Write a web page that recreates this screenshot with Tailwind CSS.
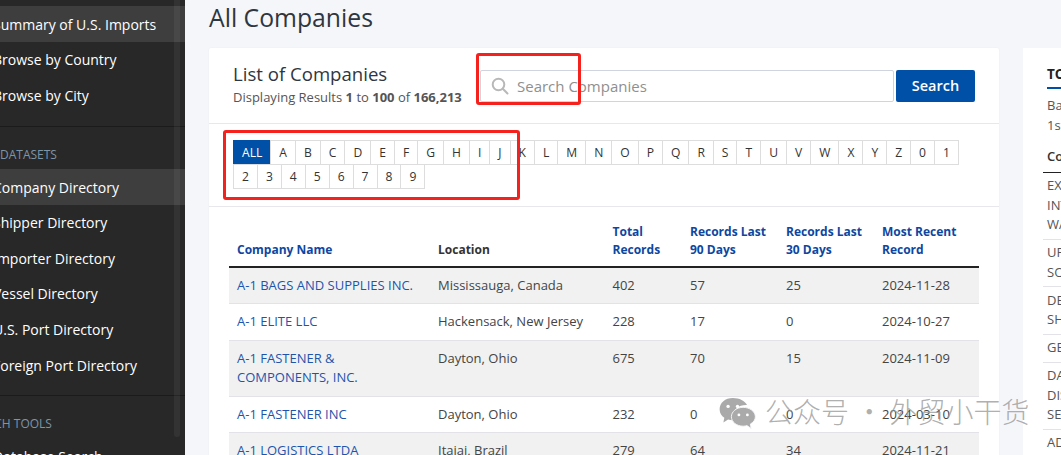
<!DOCTYPE html>
<html lang="en">
<head>
<meta charset="utf-8">
<script src="https://cdn.jsdelivr.net/npm/@tailwindcss/browser@4"></script>
</head>
<body class="relative w-[1061px] h-[455px] overflow-hidden bg-[#f5f6fa] font-['Open_Sans',sans-serif] flex">
<aside class="relative w-[185px] h-[455px] shrink-0 overflow-hidden bg-[#282828] text-white text-[14px]">
  <div class="absolute right-[5px] top-0 w-[6px] h-[437px] rounded-b bg-white/5"></div>
  <nav class="pt-[6px] w-[185px]">
    <a class="flex items-center h-[36px] -indent-[7px] bg-white/10">Summary of U.S. Imports</a>
    <a class="flex items-center h-[36px] pb-[2px] -indent-[7px]">Browse by Country</a>
    <a class="flex items-center h-[36px] pb-[2px] -indent-[7px]">Browse by City</a>
    <div class="mt-[12px] border-t border-black/30"></div>
    <p class="pt-[20px] pb-[6px] text-[12px] leading-[16px] text-[#7d95a8]">DATASETS</p>
    <a class="flex items-center h-[35.6px] pt-[1.4px] -indent-[7px] bg-white/10">Company Directory</a>
    <a class="flex items-center h-[35.6px] pt-[1px] -indent-[7px]">Shipper Directory</a>
    <a class="flex items-center h-[35.6px] pt-[1.4px] -indent-[7px]">Importer Directory</a>
    <a class="flex items-center h-[35.6px] -indent-[7px]">Vessel Directory</a>
    <a class="flex items-center h-[35.6px] pt-[1px] -indent-[7px]">U.S. Port Directory</a>
    <a class="flex items-center h-[35.6px] pt-[1.4px] -indent-[7px]">Foreign Port Directory</a>
    <div class="mt-[12px] border-t border-black/30"></div>
    <p class="pt-[20px] pb-[6px] text-[12px] leading-[16px] text-[#7d95a8] -indent-[34px] whitespace-nowrap">SEARCH TOOLS</p>
    <a class="flex items-center h-[35.6px] pt-[2px] -indent-[7px]">Database Search</a>
  </nav>
</aside>
<main class="pl-[24px] flex-1 min-w-0">
  <h1 class="text-[24.75px] leading-[36px] text-[#2f3640] font-normal h-[48px]">All Companies</h1>
  <div class="flex gap-[24px] items-start">
    <section class="w-[790px] shrink-0 bg-white rounded-t-[2px] shadow-[0_0_2px_rgba(0,0,0,0.05)]">
      <div class="flex items-start h-[76px] border-b border-[#e8e8ec] px-[24px]">
        <div class="w-[247px] shrink-0 pt-[13px]">
          <h2 class="text-[18.6px] leading-[25px] text-[#2f3640]">List of Companies</h2>
          <p class="text-[13px] leading-[20px] pt-[1px] text-[#555] whitespace-nowrap">Displaying Results <b>1</b> to <b>100</b> of <b>166,213</b></p>
        </div>
        <div class="flex items-center gap-[2px] mt-[22px] flex-1">
          <div class="flex items-center flex-1 h-[32px] border border-[#cfd4de] rounded-[2px] pl-[10px]">
            <svg class="w-[18px] h-[18px] text-[#b8b8b8]" viewBox="0 0 18 18" fill="none" stroke="currentColor" stroke-width="2"><circle cx="7.500" cy="7.500" r="5.800"/><path d="M11.800 11.800 16.500 16.500" stroke-linecap="round"/></svg>
            <span class="ml-[8px] text-[15px] text-[#8f8f8f]">Search Companies</span>
          </div>
          <button class="w-[79px] h-[32px] rounded-[2px] bg-[#0050a8] text-white text-[14.5px] font-semibold">Search</button>
        </div>
      </div>
      <div class="h-[83px] border-b border-[#e8e8ec] px-[24px] pt-[16px]">
        <div class="flex flex-wrap text-[12.1px] text-[#333]">
          <a class="h-[25px] leading-[23px] px-[8px] border border-[#0050a8] bg-[#0050a8] text-white font-medium mr-[-1px] mb-[-1px]">ALL</a>
          <a class="h-[25px] leading-[23px] px-[8px] border border-[#ddd] mr-[-1px] mb-[-1px]">A</a>
          <a class="h-[25px] leading-[23px] px-[8px] border border-[#ddd] mr-[-1px] mb-[-1px]">B</a>
          <a class="h-[25px] leading-[23px] px-[8px] border border-[#ddd] mr-[-1px] mb-[-1px]">C</a>
          <a class="h-[25px] leading-[23px] px-[8px] border border-[#ddd] mr-[-1px] mb-[-1px]">D</a>
          <a class="h-[25px] leading-[23px] px-[8px] border border-[#ddd] mr-[-1px] mb-[-1px]">E</a>
          <a class="h-[25px] leading-[23px] px-[8px] border border-[#ddd] mr-[-1px] mb-[-1px]">F</a>
          <a class="h-[25px] leading-[23px] px-[8px] border border-[#ddd] mr-[-1px] mb-[-1px]">G</a>
          <a class="h-[25px] leading-[23px] px-[8px] border border-[#ddd] mr-[-1px] mb-[-1px]">H</a>
          <a class="h-[25px] leading-[23px] px-[8px] border border-[#ddd] mr-[-1px] mb-[-1px]">I</a>
          <a class="h-[25px] leading-[23px] px-[8px] border border-[#ddd] mr-[-1px] mb-[-1px]">J</a>
          <a class="h-[25px] leading-[23px] px-[8px] border border-[#ddd] mr-[-1px] mb-[-1px]">K</a>
          <a class="h-[25px] leading-[23px] px-[8px] border border-[#ddd] mr-[-1px] mb-[-1px]">L</a>
          <a class="h-[25px] leading-[23px] px-[8px] border border-[#ddd] mr-[-1px] mb-[-1px]">M</a>
          <a class="h-[25px] leading-[23px] px-[8px] border border-[#ddd] mr-[-1px] mb-[-1px]">N</a>
          <a class="h-[25px] leading-[23px] px-[8px] border border-[#ddd] mr-[-1px] mb-[-1px]">O</a>
          <a class="h-[25px] leading-[23px] px-[8px] border border-[#ddd] mr-[-1px] mb-[-1px]">P</a>
          <a class="h-[25px] leading-[23px] px-[8px] border border-[#ddd] mr-[-1px] mb-[-1px]">Q</a>
          <a class="h-[25px] leading-[23px] px-[8px] border border-[#ddd] mr-[-1px] mb-[-1px]">R</a>
          <a class="h-[25px] leading-[23px] px-[8px] border border-[#ddd] mr-[-1px] mb-[-1px]">S</a>
          <a class="h-[25px] leading-[23px] px-[8px] border border-[#ddd] mr-[-1px] mb-[-1px]">T</a>
          <a class="h-[25px] leading-[23px] px-[8px] border border-[#ddd] mr-[-1px] mb-[-1px]">U</a>
          <a class="h-[25px] leading-[23px] px-[8px] border border-[#ddd] mr-[-1px] mb-[-1px]">V</a>
          <a class="h-[25px] leading-[23px] px-[8px] border border-[#ddd] mr-[-1px] mb-[-1px]">W</a>
          <a class="h-[25px] leading-[23px] px-[8px] border border-[#ddd] mr-[-1px] mb-[-1px]">X</a>
          <a class="h-[25px] leading-[23px] px-[8px] border border-[#ddd] mr-[-1px] mb-[-1px]">Y</a>
          <a class="h-[25px] leading-[23px] px-[8px] border border-[#ddd] mr-[-1px] mb-[-1px]">Z</a>
          <a class="h-[25px] leading-[23px] px-[8px] border border-[#ddd] mr-[-1px] mb-[-1px]">0</a>
          <a class="h-[25px] leading-[23px] px-[8px] border border-[#ddd] mr-[-1px] mb-[-1px]">1</a>
          <a class="h-[25px] leading-[23px] px-[8px] border border-[#ddd] mr-[-1px] mb-[-1px]">2</a>
          <a class="h-[25px] leading-[23px] px-[8px] border border-[#ddd] mr-[-1px] mb-[-1px]">3</a>
          <a class="h-[25px] leading-[23px] px-[8px] border border-[#ddd] mr-[-1px] mb-[-1px]">4</a>
          <a class="h-[25px] leading-[23px] px-[8px] border border-[#ddd] mr-[-1px] mb-[-1px]">5</a>
          <a class="h-[25px] leading-[23px] px-[8px] border border-[#ddd] mr-[-1px] mb-[-1px]">6</a>
          <a class="h-[25px] leading-[23px] px-[8px] border border-[#ddd] mr-[-1px] mb-[-1px]">7</a>
          <a class="h-[25px] leading-[23px] px-[8px] border border-[#ddd] mr-[-1px] mb-[-1px]">8</a>
          <a class="h-[25px] leading-[23px] px-[8px] border border-[#ddd] mr-[-1px] mb-[-1px]">9</a>
        </div>
      </div>
      <div class="px-[20px] pt-[8px]">
        <table class="w-[750px] table-fixed border-collapse text-[13px] leading-[19px] text-[#444]">
          <colgroup><col class="w-[201px]"><col class="w-[174.5px]"><col class="w-[77.5px]"><col class="w-[96px]"><col class="w-[96px]"><col class="w-[105px]"></colgroup>
          <thead class="text-[12px] leading-[18px] font-bold text-[#0d47a1] text-left">
            <tr class="border-b-2 border-[#222]">
              <th class="align-bottom pt-[8px] px-[8px] pb-[7px] font-bold">Company Name</th>
              <th class="align-bottom pt-[8px] px-[8px] pb-[7px] font-bold text-[#333]">Location</th>
              <th class="align-bottom pt-[8px] px-[8px] pb-[7px] font-bold">Total Records</th>
              <th class="align-bottom pt-[8px] px-[8px] pb-[7px] font-bold">Records Last 90 Days</th>
              <th class="align-bottom pt-[8px] px-[8px] pb-[7px] font-bold">Records Last 30 Days</th>
              <th class="align-bottom pt-[8px] px-[8px] pb-[7px] font-bold">Most Recent Record</th>
            </tr>
          </thead>
          <tbody>
            <tr class="bg-[#f1f1f1] border-b border-[#e2e2e8]"><td class="align-top py-[8px] px-[8px] text-[#1d55ad]">A-1 BAGS AND SUPPLIES INC.</td><td class="align-top py-[8px] px-[8px]">Mississauga, Canada</td><td class="align-top py-[8px] px-[8px]">402</td><td class="align-top py-[8px] px-[8px]">57</td><td class="align-top py-[8px] px-[8px]">25</td><td class="align-top py-[8px] px-[8px]">2024-11-28</td></tr>
            <tr class="border-b border-[#e2e2e8]"><td class="align-top pt-[8px] pb-[9px] px-[8px] text-[#1d55ad]">A-1 ELITE LLC</td><td class="align-top pt-[8px] pb-[9px] px-[8px]">Hackensack, New Jersey</td><td class="align-top pt-[8px] pb-[9px] px-[8px]">228</td><td class="align-top pt-[8px] pb-[9px] px-[8px]">17</td><td class="align-top pt-[8px] pb-[9px] px-[8px]">0</td><td class="align-top pt-[8px] pb-[9px] px-[8px]">2024-10-27</td></tr>
            <tr class="bg-[#f1f1f1] border-b border-[#e2e2e8]"><td class="align-top pt-[8px] pb-[9px] px-[8px] text-[#1d55ad]">A-1 FASTENER &amp; COMPONENTS, INC.</td><td class="align-top pt-[8px] pb-[9px] px-[8px]">Dayton, Ohio</td><td class="align-top pt-[8px] pb-[9px] px-[8px]">675</td><td class="align-top pt-[8px] pb-[9px] px-[8px]">70</td><td class="align-top pt-[8px] pb-[9px] px-[8px]">15</td><td class="align-top pt-[8px] pb-[9px] px-[8px]">2024-11-09</td></tr>
            <tr class="border-b border-[#e2e2e8]"><td class="align-top py-[8px] px-[8px] text-[#1d55ad]">A-1 FASTENER INC</td><td class="align-top py-[8px] px-[8px]">Dayton, Ohio</td><td class="align-top py-[8px] px-[8px]">232</td><td class="align-top py-[8px] px-[8px]">0</td><td class="align-top py-[8px] px-[8px]">0</td><td class="align-top py-[8px] px-[8px]">2024-03-10</td></tr>
            <tr class="bg-[#f1f1f1] border-b border-[#e2e2e8]"><td class="align-top py-[8px] px-[8px] text-[#1d55ad]">A-1 LOGISTICS LTDA</td><td class="align-top py-[8px] px-[8px]">Itajai, Brazil</td><td class="align-top py-[8px] px-[8px]">279</td><td class="align-top py-[8px] px-[8px]">64</td><td class="align-top py-[8px] px-[8px]">34</td><td class="align-top py-[8px] px-[8px]">2024-11-21</td></tr>
          </tbody>
        </table>
      </div>
    </section>
    <section class="w-[300px] shrink-0 bg-white pl-[20px] text-[13px] leading-[19.5px] text-[#555] h-[420px]">
      <div class="pl-[4px] pt-[16px]">
        <h3 class="w-fit text-[13.5px] font-bold leading-[20px] text-[#222] border-b-2 border-[#0050a8] pb-[3px]">TOP COMPANIES</h3>
        <p class="mt-[7px]">Based on records</p>
        <p>1st of the month</p>
        <p class="mt-[12px] pb-[5px] font-semibold text-[#333]">Company</p>
      </div>
      <ul class="border-t border-[#222] [&>li]:border-b [&>li]:border-[#e2e2e8] [&>li]:px-[4px] [&>li]:py-[3.75px]">
        <li>EXPEDITORS<br>INTERNATIONAL OF<br>WASHINGTON</li>
        <li>UPS SUPPLY CHAIN<br>SOLUTIONS</li>
        <li>DELMAR<br>SHIPPING</li>
        <li>GEODIS</li>
        <li>DAMCO<br>DISTRIBUTION<br>SERVICES</li>
        <li>ADVANCED</li>
      </ul>
    </section>
  </div>
</main>
<div class="absolute left-[476px] top-[53px] w-[105px] h-[52px] border-[3px] border-[#f5211d] rounded-[3px]"></div>
<div class="absolute left-[223px] top-[130px] w-[297px] h-[70px] border-[3px] border-[#f5211d] rounded-[3px]"></div>
<div class="absolute left-[718px] top-[393px] flex items-center gap-[8px] text-[#9a9a9a]/80 font-light font-['Noto_Sans_CJK_SC',sans-serif] text-[28px] leading-[36px]">
  <svg class="w-[39px] h-[32px] mt-[3px]" viewBox="0 0 40 34" fill="#aaa"><path d="M15 1C7 1 1 6 1 13c0 4 2 7 5 9l-1 5 5-3c2 .6 4 .8 6 .7-.6-1.600-.9-3-.9-4.500 0-6.700 6-11.700 14-11.700h1C28 4 22 1 15 1Z"/><path d="M26 11c-7 0-12.500 4.500-12.500 10S19 31 26 31c1.500 0 3-.2 4-.6l4.500 3-.8-4.700C37 27 39 24 39 21c0-5.500-6-10-13-10Z" stroke="#f5f6fa" stroke-width="1"/><circle cx="10" cy="10" r="1.800" fill="#fff"/><circle cx="20" cy="10" r="1.800" fill="#fff"/><circle cx="21.500" cy="19" r="1.500" fill="#fff"/><circle cx="30.500" cy="19" r="1.500" fill="#fff"/></svg>
  <span>公众号 · 外贸小干货</span>
</div>
</body>
</html>
